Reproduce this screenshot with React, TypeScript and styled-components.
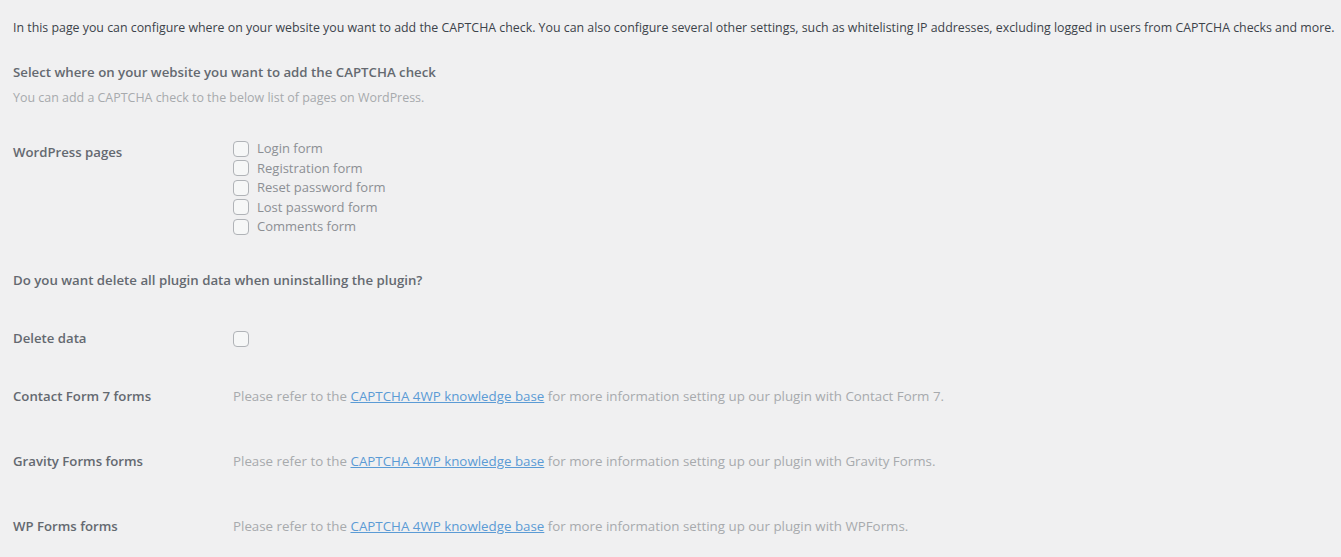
import React from "react";
import styled, { createGlobalStyle } from "styled-components";

const Global = createGlobalStyle`
  html, body { margin: 0; padding: 0; background: #f0f0f1; }
  body { font-family: "Open Sans", "Noto Sans", sans-serif; font-size: 13px; }
`;

const Page = styled.div`
  padding: 18px 0 0 13px;
  color: #3c434a;
  font-size: 13px;
  line-height: 19.5px;
`;

const Intro = styled.p`
  margin: 0;
  color: #3c434a;
  font-size: 12.37px;
  white-space: nowrap;
`;

const SectionTitle = styled.h2<{ $top: number }>`
  margin: ${(p) => p.$top}px 0 0;
  font-size: 13.25px;
  line-height: 19.5px;
  font-weight: 600;
  color: #646970;
`;

const Description = styled.p`
  margin: 5.5px 0 0;
  color: #a7aaad;
  font-size: 12.45px;
`;

const Row = styled.div<{ $top: number }>`
  display: grid;
  grid-template-columns: 220px 1fr;
  margin-top: ${(p) => p.$top}px;
  align-items: start;
`;

const Label = styled.div<{ $offset?: number }>`
  font-weight: 600;
  font-size: 13.2px;
  color: #646970;
  padding-top: ${(p) => p.$offset ?? 0}px;
`;

const CheckList = styled.div`
  display: flex;
  flex-direction: column;
`;

const CheckLine = styled.label`
  display: flex;
  align-items: center;
  gap: 8px;
  height: 19.5px;
  color: #8c8f94;
`;

const Box = styled.span`
  display: inline-block;
  width: 14px;
  height: 14px;
  border: 1px solid #b0b3b7;
  border-radius: 4px;
  background: #f6f7f7;
  flex: none;
`;

const Note = styled.div`
  color: #a7aaad;
  font-size: 13.33px;
  white-space: nowrap;
`;

const Link = styled.a`
  color: #5b9bd5;
  text-decoration: underline;
`;

const pages = [
  "Login form",
  "Registration form",
  "Reset password form",
  "Lost password form",
  "Comments form",
];

const integrations: { label: string; name: string; top: number }[] = [
  { label: "Contact Form 7 forms", name: "Contact Form 7", top: 38.5 },
  { label: "Gravity Forms forms", name: "Gravity Forms", top: 45.5 },
  { label: "WP Forms forms", name: "WPForms", top: 45.5 },
];

export default function App() {
  return (
    <>
      <Global />
      <Page>
        <Intro>
          In this page you can configure where on your website you want to add the CAPTCHA check. You can also
          configure several other settings, such as whitelisting IP addresses, excluding logged in users from
          CAPTCHA checks and more.
        </Intro>
        <SectionTitle $top={25.5}>Select where on your website you want to add the CAPTCHA check</SectionTitle>
        <Description>You can add a CAPTCHA check to the below list of pages on WordPress.</Description>
        <Row $top={31.5}>
          <Label $offset={4}>WordPress pages</Label>
          <CheckList>
            {pages.map((p) => (
              <CheckLine key={p}>
                <Box />
                {p}
              </CheckLine>
            ))}
          </CheckList>
        </Row>
        <SectionTitle $top={34.5}>Do you want delete all plugin data when uninstalling the plugin?</SectionTitle>
        <Row $top={38.5}>
          <Label>Delete data</Label>
          <CheckLine>
            <Box />
          </CheckLine>
        </Row>
        {integrations.map((it) => (
          <Row key={it.label} $top={it.top}>
            <Label>{it.label}</Label>
            <Note>
              Please refer to the <Link href="#">CAPTCHA 4WP knowledge base</Link> for more information setting up
              our plugin with {it.name}.
            </Note>
          </Row>
        ))}
      </Page>
    </>
  );
}
